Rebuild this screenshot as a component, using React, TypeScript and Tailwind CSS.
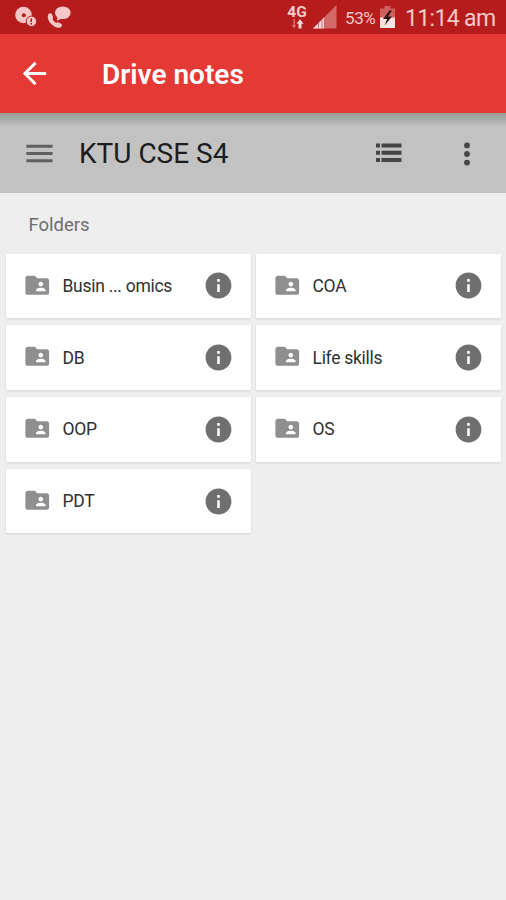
const folders = ["Busin ... omics", "COA", "DB", "Life skills", "OOP", "OS", "PDT"];

const StatusBar = () => {
  return (
    <div className="h-[34px] bg-[#b71c1c] flex items-center text-[#f3c9c9]">
      <svg className="ml-[14px] mt-[1px] shrink-0" width="24" height="24" viewBox="0 0 24 24">
        <circle cx="9.5" cy="9" r="8.3" fill="#f4c6c6" />
        <circle cx="9.8" cy="9.2" r="2" fill="#b71c1c" />
        <circle cx="17.4" cy="15.3" r="5.2" fill="#f4c6c6" stroke="#b71c1c" strokeWidth="1" />
        <path d="M17.2 12.4v3.6M17.2 17v1.4" stroke="#b71c1c" strokeWidth="1.6" />
      </svg>
      <svg className="ml-[9px] shrink-0" width="26" height="26" viewBox="0 0 26 26">
        <path
          d="M1.5 10c1.1-1.2 2.6-1 3.2.1l1.3 2.7c.3.8.1 1.5-.5 2.1 1 2 2.3 3.1 4 4 .8-.7 1.5-.8 2.2-.4l2.7 1.500c.9.6.9 1.700.1 2.500-1.300 1.400-3.300 1.700-5.400.8C4.600 21.200 1.600 17.800.900 13.900c-.2-1.600-.1-2.900.6-3.900z"
          fill="#f4c6c6"
        />
        <ellipse cx="15.8" cy="8.8" rx="7.9" ry="6.3" fill="#f4c6c6" />
        <path d="M10.5 12.5l-.5 4.2 5-2.5z" fill="#f4c6c6" />
      </svg>
      <div className="ml-[214px] w-5 shrink-0 flex flex-col items-center">
        <span className="font-['Roboto'] text-[15.5px] leading-[14px] font-bold">4G</span>
        <svg width="14" height="10" viewBox="0 0 14 10">
          <path d="M3.5 0v6H1.5L4.5 9.5 6 6H5V0z" fill="#d96f6f" />
          <path d="M10 .3l3.500 4.400h-2V9.500h-3V4.700h-2z" fill="#f8dada" />
        </svg>
      </div>
      <svg className="ml-[6px] shrink-0" width="24" height="24" viewBox="0 0 24 24">
        <path d="M0 23.5L23.5 0v23.5z" fill="#d26868" />
        <path d="M0 23.5L11 12.5v11z" fill="#f6d6d6" />
        <path d="M5.5 17v6.5M9 14v9.5" stroke="#c64a4a" strokeWidth="0.7" />
      </svg>
      <span className="ml-[8px] w-[32px] mt-[3px] shrink-0 font-['Roboto'] text-[17px] tracking-[-0.4px]">53%</span>
      <svg className="ml-[3px] mt-[-1px] shrink-0" width="15" height="22" viewBox="0 0 15 22">
        <path d="M4.5 0h6v2.5H15V22H0V2.5h4.5z" fill="#cf5f5f" />
        <path d="M0 11.5h15V22H0z" fill="#f8e2e2" />
        <path d="M9.5 4.5L3 13h4.2L4.5 19.5 12 10.5H7.8L12 4.5z" fill="#2b1010" />
      </svg>
      <span className="ml-[10px] mt-[3px] font-['Roboto'] text-[23px] tracking-[-0.65px] leading-none whitespace-nowrap">11:14 am</span>
    </div>
  );
};

const FolderCard = ({ name }: { name: string }) => {
  return (
    <div className="h-[64.8px] bg-white flex items-center px-[17px] shadow-[0_1px_2px_rgba(0,0,0,0.12)]">
      <svg className="-mt-[2px]" width="28.5" height="28.5" viewBox="0 0 24 24" fill="#8f8f8f">
        <path d="M20 6h-8l-2-2H4c-1.100 0-1.990.900-1.990 2L2 18c0 1.100.900 2 2 2h16c1.100 0 2-.900 2-2V8c0-1.100-.900-2-2-2zm-5 3c1.100 0 2 .900 2 2s-.900 2-2 2-2-.900-2-2 .900-2 2-2zm4 8h-8v-1c0-1.330 2.670-2 4-2s4 .670 4 2v1z" />
      </svg>
      <span className="ml-[11px] flex-1 font-['Roboto'] text-[17.5px] tracking-[-0.28px] text-[#303030] whitespace-nowrap">{name}</span>
      <svg width="31" height="31" viewBox="0 0 24 24" fill="#6f6f6f">
        <path d="M12 2C6.480 2 2 6.480 2 12s4.480 10 10 10 10-4.480 10-10S17.520 2 12 2zm1 15h-2v-6h2v6zm0-8h-2V7h2v2z" />
      </svg>
    </div>
  );
};

export default function App() {
  return (
    <div className="w-[506px] h-[900px] bg-[#eeeeee] overflow-hidden">
      <StatusBar />
      <header className="h-[79px] bg-[#e53935] flex items-center pl-[17px]">
        <svg width="35" height="35" viewBox="0 0 24 24" fill="#ffffff">
          <path d="M20 11H7.830l5.590-5.590L12 4l-8 8 8 8 1.410-1.410L7.830 13H20v-2z" />
        </svg>
        <h1 className="ml-[50px] mt-[3px] font-['Roboto'] text-[28px] font-semibold text-white whitespace-nowrap">Drive notes</h1>
      </header>
      <div className="h-[80px] bg-[#c2c2c2] bg-linear-to-b from-[#989b98] from-0% to-[#c2c2c2] to-[14px] flex items-center pl-[22px]">
        <svg className="mt-[1px]" width="35" height="35" viewBox="0 0 24 24" fill="#606060">
          <path d="M3 18h18v-2H3v2zm0-5h18v-2H3v2zm0-7v2h18V6H3z" />
        </svg>
        <h2 className="ml-[22px] mt-[2px] w-[296px] font-['Roboto'] text-[28px] text-[#1c1c1c] whitespace-nowrap">KTU CSE S4</h2>
        <svg width="28" height="20" viewBox="0 0 28 20" fill="#454545">
          <path d="M1 .5h4v4H1zM6.5.5H26.500v4H6.500zM1 7.700h4v4H1zM6.500 7.700H26.500v4H6.500zM1 15h4v4H1zM6.500 15H26.500v4H6.500z" />
        </svg>
        <svg className="ml-[60px] mt-[1px]" width="8" height="24" viewBox="0 0 8 24" fill="#454545">
          <circle cx="4" cy="3.4" r="2.9" />
          <circle cx="4" cy="12" r="2.9" />
          <circle cx="4" cy="20.6" r="2.9" />
        </svg>
      </div>
      <p className="h-[60.6px] pl-[28.5px] pt-[18px] font-['Roboto'] text-[18.5px] leading-[28px] text-[#6d6d6d]">Folders</p>
      <div className="grid grid-cols-2 gap-x-[5px] gap-y-[6.9px] pl-[6px] pr-[5px]">
        {folders.map((name) => (
          <FolderCard key={name} name={name} />
        ))}
      </div>
    </div>
  );
}
